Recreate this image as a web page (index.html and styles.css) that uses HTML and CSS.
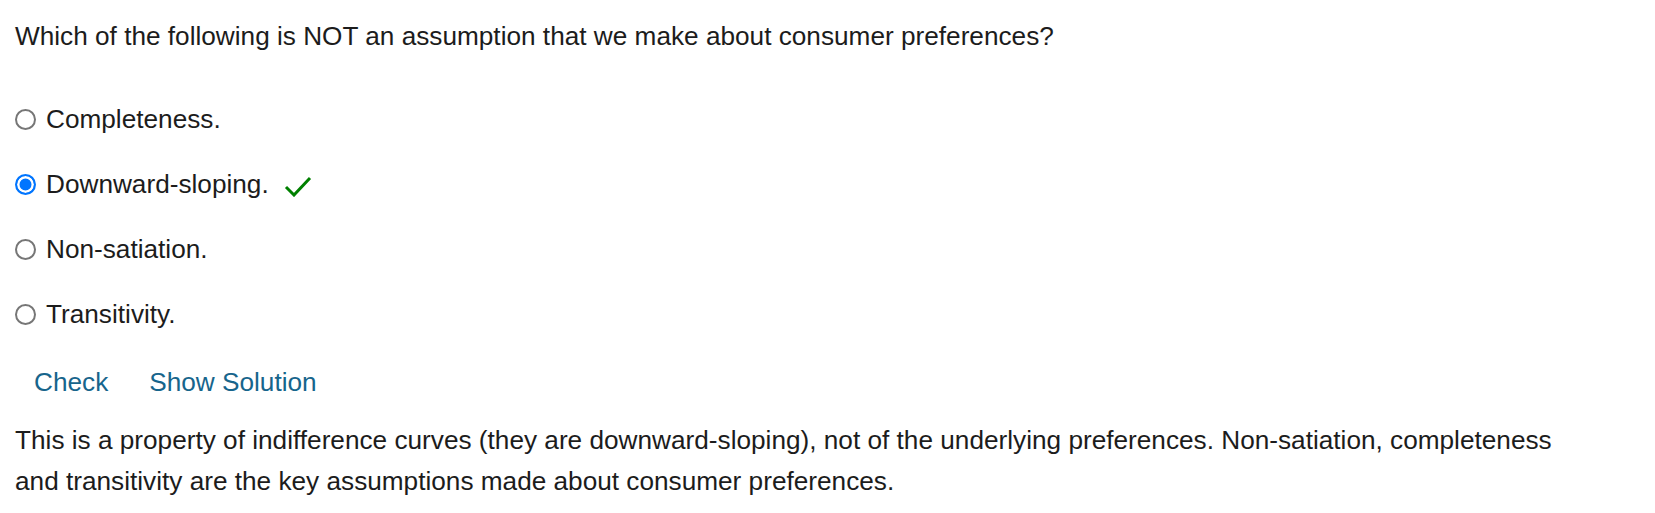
FILE: index.html
```html
<!DOCTYPE html>
<html lang="en">
<head>
<meta charset="utf-8">
<title>Question</title>
<link rel="stylesheet" href="styles.css">
</head>
<body>
<div class="quiz">
  <p class="question">Which of the following is NOT an assumption that we make about consumer preferences?</p>
  <div class="options">
    <label class="option"><span class="radio"></span><span class="label">Completeness.</span></label>
    <label class="option"><span class="radio checked"></span><span class="label">Downward-sloping.</span>
      <svg class="tick" width="28" height="22" viewBox="0 0 28 22"><path d="M2 12 L10 20 L26 3" fill="none" stroke="#008000" stroke-width="3"/></svg>
    </label>
    <label class="option"><span class="radio"></span><span class="label">Non-satiation.</span></label>
    <label class="option"><span class="radio"></span><span class="label">Transitivity.</span></label>
  </div>
  <div class="actions">
    <span class="btn">Check</span>
    <span class="btn">Show Solution</span>
  </div>
  <p class="solution">This is a property of indifference curves (they are downward-sloping), not of the underlying preferences. Non-satiation, completeness and transitivity are the key assumptions made about consumer preferences.</p>
</div>
</body>
</html>
```
FILE: styles.css
```css
html, body {
  margin: 0;
  padding: 0;
  background: #ffffff;
}
body {
  font-family: "Liberation Sans", Arial, sans-serif;
  font-size: 26.2px;
  color: #1c1c1c;
}
.quiz {
  padding: 16px 15px 0 15px;
  display: flex;
  flex-direction: column;
}
.question {
  margin: 0;
  line-height: 41px;
}
.options {
  margin-top: 42px;
  display: flex;
  flex-direction: column;
  gap: 24px;
}
.option {
  display: flex;
  align-items: center;
  height: 41px;
}
.radio {
  box-sizing: border-box;
  width: 21px;
  height: 21px;
  border: 2px solid #767676;
  border-radius: 50%;
  margin-right: 10px;
  flex: none;
  background: #fff;
}
.radio.checked {
  border: 2px solid #0075ff;
  background: #0075ff;
  box-shadow: inset 0 0 0 2.5px #fff;
}
.tick {
  margin-left: 15px;
  margin-top: 2px;
}
.actions {
  margin-top: 27px;
  display: flex;
  gap: 41px;
  padding-left: 19px;
  line-height: 41px;
}
.btn {
  color: #17658c;
}
.solution {
  margin: 17px 0 0 0;
  line-height: 41px;
  max-width: 1565px;
}
```
